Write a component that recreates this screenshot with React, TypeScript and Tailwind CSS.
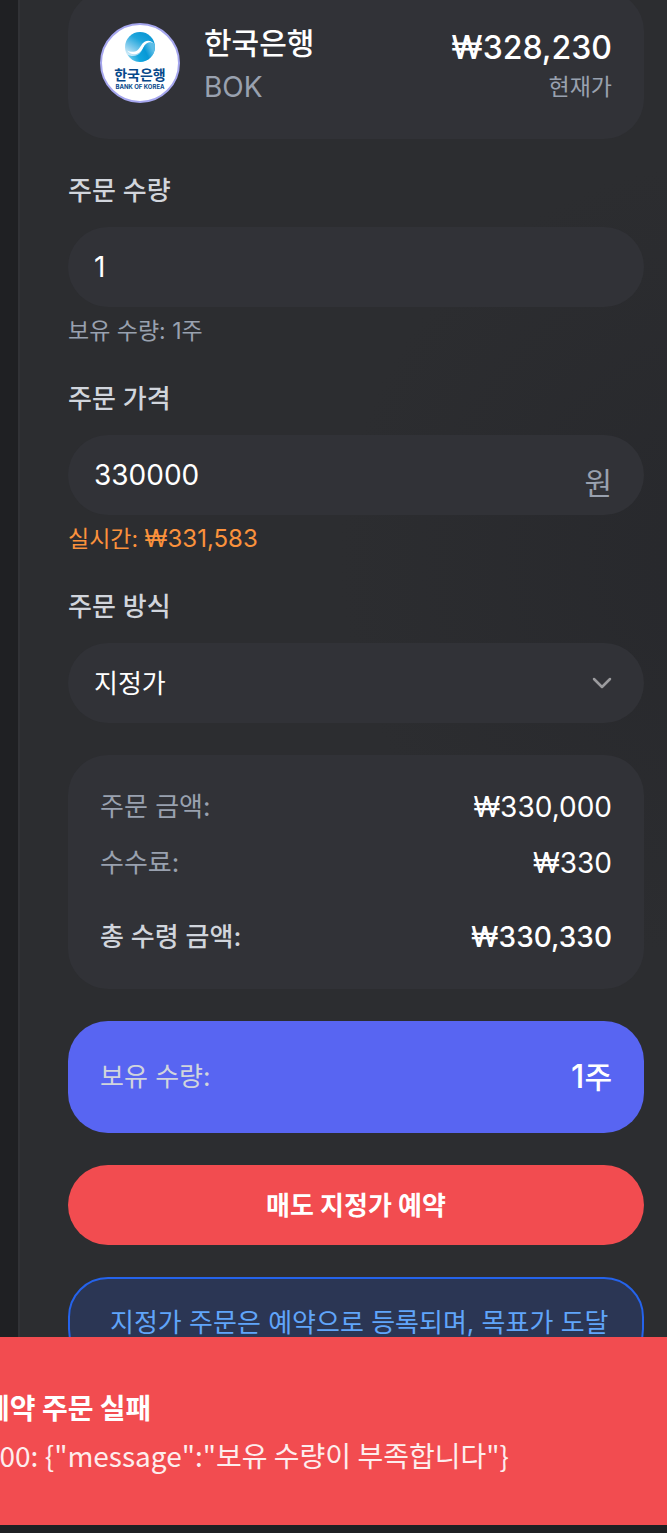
import { useState } from "react";
import type { ReactNode } from "react";

function Emblem() {
  return (
    <svg viewBox="0 0 30 30" className="size-[30px]" aria-hidden="true">
      <defs>
        <linearGradient id="upper" x1="0.15" y1="0.9" x2="0.65" y2="0.1">
          <stop offset="0" stopColor="#eef8fd" />
          <stop offset="0.4" stopColor="#7cc9ec" />
          <stop offset="0.75" stopColor="#1fa6dc" />
          <stop offset="1" stopColor="#0e9ad6" />
        </linearGradient>
        <linearGradient id="lower" x1="0" y1="0.6" x2="0.9" y2="0.3">
          <stop offset="0" stopColor="#6cc9ea" />
          <stop offset="0.35" stopColor="#12a6de" />
          <stop offset="0.7" stopColor="#0798d6" />
          <stop offset="1" stopColor="#5dbde6" />
        </linearGradient>
      </defs>
      <circle cx="15" cy="15" r="15" fill="url(#upper)" />
      <path d="M10 19.500c4-1 5-5 7.500-8C20.500 8 26 7 29.800 13 28 10.500 24 10 21 12.500c-3 2.700-4 8-9.500 9.500-4 1-7-.5-9.500-3.500 2.500 1.500 5.500 1.600 8 1Z" fill="#fff" />
      <path d="M2.500 22.500c4 2.500 10.500 2 13.500-2.500 2-3 2.500-6.500 5.500-8.500 3.500-2.300 7-1 8.300 1.500C31 22 24 30 15 30 9.500 30 5 27 2.500 22.500Z" fill="url(#lower)" />
    </svg>
  );
}

function BankLogo() {
  return (
    <div className="flex size-20 shrink-0 flex-col items-center rounded-full border-2 border-[#a5a6ee] bg-white pt-[7px]">
      <Emblem />
      <span className="mt-1 text-[14px] leading-[18px] font-bold whitespace-nowrap text-[#07488a]">한국은행</span>
      <span className="text-[6px] leading-[6px] font-bold whitespace-nowrap text-[#07488a]">BANK OF KOREA</span>
    </div>
  );
}

function Field({ id, label, children, hint }: { id: string; label: string; children: ReactNode; hint?: ReactNode }) {
  return (
    <div className="flex flex-col">
      <label htmlFor={id} className="mb-4 text-[26px] leading-10 font-medium text-gray-300">
        {label}
      </label>
      {children}
      {hint}
    </div>
  );
}

function Row({ label, value, strong }: { label: string; value: string; strong?: boolean }) {
  return (
    <div className={strong ? "mt-4 flex justify-between border-t-2 border-[#313237] pt-4 leading-10 font-medium" : "flex justify-between leading-10"}>
      <dt className={strong ? "text-[26px] text-gray-300" : "text-[26px] text-gray-400"}>{label}</dt>
      <dd className="text-[28px] text-white">{value}</dd>
    </div>
  );
}

const inputClass =
  "h-20 w-full rounded-[40px] bg-[#313237] px-[26px] text-[28px] text-white outline-none focus:ring-2 focus:ring-[#5865f2]";

export default function App() {
  const [quantity, setQuantity] = useState("1");
  const [price, setPrice] = useState("330000");
  const [method, setMethod] = useState("limit");

  return (
    <div className="relative flex min-h-screen flex-col overflow-hidden bg-[#1f2023] pb-2 pl-[18px] font-[Inter,'Noto_Sans_CJK_KR',sans-serif]">
      <main className="flex-1 border-l-2 border-[#313236] bg-[#2c2d30] bg-[radial-gradient(circle_at_720px_560px,#27282c_0px,#2c2d30_400px)] pr-[23px] pb-8 pl-12">
        <form className="-mt-[9px] flex flex-col gap-8" onSubmit={(e) => e.preventDefault()}>
          <section className="flex h-[148px] items-start rounded-[40px] bg-[#313237] p-8">
            <BankLogo />
            <div className="ml-6 flex-1">
              <h1 className="text-[30px] leading-10 font-medium text-white">한국은행</h1>
              <p className="text-[28px] leading-12 text-gray-400">BOK</p>
            </div>
            <div className="text-right">
              <p className="text-[32px] leading-[50px] font-medium text-white">₩328,230</p>
              <p className="text-[23px] leading-7 text-gray-400">현재가</p>
            </div>
          </section>

          <Field
            id="quantity"
            label="주문 수량"
            hint={
              <p className="mt-2 text-[23px] leading-8 text-gray-400">
                보유 수량: 1주
              </p>
            }
          >
            <input id="quantity" inputMode="numeric" value={quantity} onChange={(e) => setQuantity(e.target.value)} className={inputClass} />
          </Field>

          <Field
            id="price"
            label="주문 가격"
            hint={
              <p className="mt-2 text-[23px] leading-8 text-[#fb923c]">
                실시간: <span className="text-[24px]">₩331,583</span>
              </p>
            }
          >
            <div className="relative">
              <input id="price" inputMode="numeric" value={price} onChange={(e) => setPrice(e.target.value)} className={inputClass} />
              <span className="absolute top-6 right-8 text-[30px] leading-12 text-gray-400">원</span>
            </div>
          </Field>

          <Field id="method" label="주문 방식">
            <div className="relative">
              <select
                id="method"
                value={method}
                onChange={(e) => setMethod(e.target.value)}
                className="h-20 w-full appearance-none rounded-[40px] bg-[#313237] px-[26px] text-[26px] text-white outline-none"
              >
                <option value="limit">지정가</option>
              </select>
              <svg viewBox="0 0 32 32" className="pointer-events-none absolute top-6 right-[26px] size-8" fill="none" stroke="#9b9b9e" strokeWidth="2.500" strokeLinecap="round" strokeLinejoin="round" aria-hidden="true">
                <path d="m8 12 8 8 8-8" />
              </svg>
            </div>
          </Field>

          <dl className="rounded-[40px] bg-[#313237] p-8">
            <div className="flex flex-col gap-4">
              <Row label="주문 금액:" value="₩330,000" />
              <Row label="수수료:" value="₩330" />
            </div>
            <Row label="총 수령 금액:" value="₩330,330" strong />
          </dl>

          <section className="flex items-center justify-between rounded-[40px] bg-[#5865f2] p-8 leading-12">
            <span className="text-[26px] text-gray-300">보유 수량:</span>
            <span className="text-[30px] font-medium text-white">
              <span className="text-[32px]">1</span>주
            </span>
          </section>

          <button type="submit" className="h-20 rounded-[40px] bg-[#f24c50] text-[26px] font-bold text-white">
            매도 지정가 예약
          </button>

          <p className="rounded-[40px] border-2 border-[#2563eb] bg-[#2b3654] px-10 py-6 text-[26px] leading-10 whitespace-nowrap text-[#60a5fa]">
            지정가 주문은 예약으로 등록되며, 목표가 도달
          </p>
        </form>
      </main>

      <div
        role="alert"
        className="fixed right-0 bottom-2 -left-4 flex h-[188px] flex-col justify-center bg-[#f24c50] font-['Noto_Sans_CJK_KR',sans-serif] text-[28px] leading-12 whitespace-nowrap text-white"
      >
        <p className="font-bold">예약 주문 실패</p>
        <p className="opacity-90">400: {'{"message":"보유 수량이 부족합니다"}'}</p>
      </div>
    </div>
  );
}
